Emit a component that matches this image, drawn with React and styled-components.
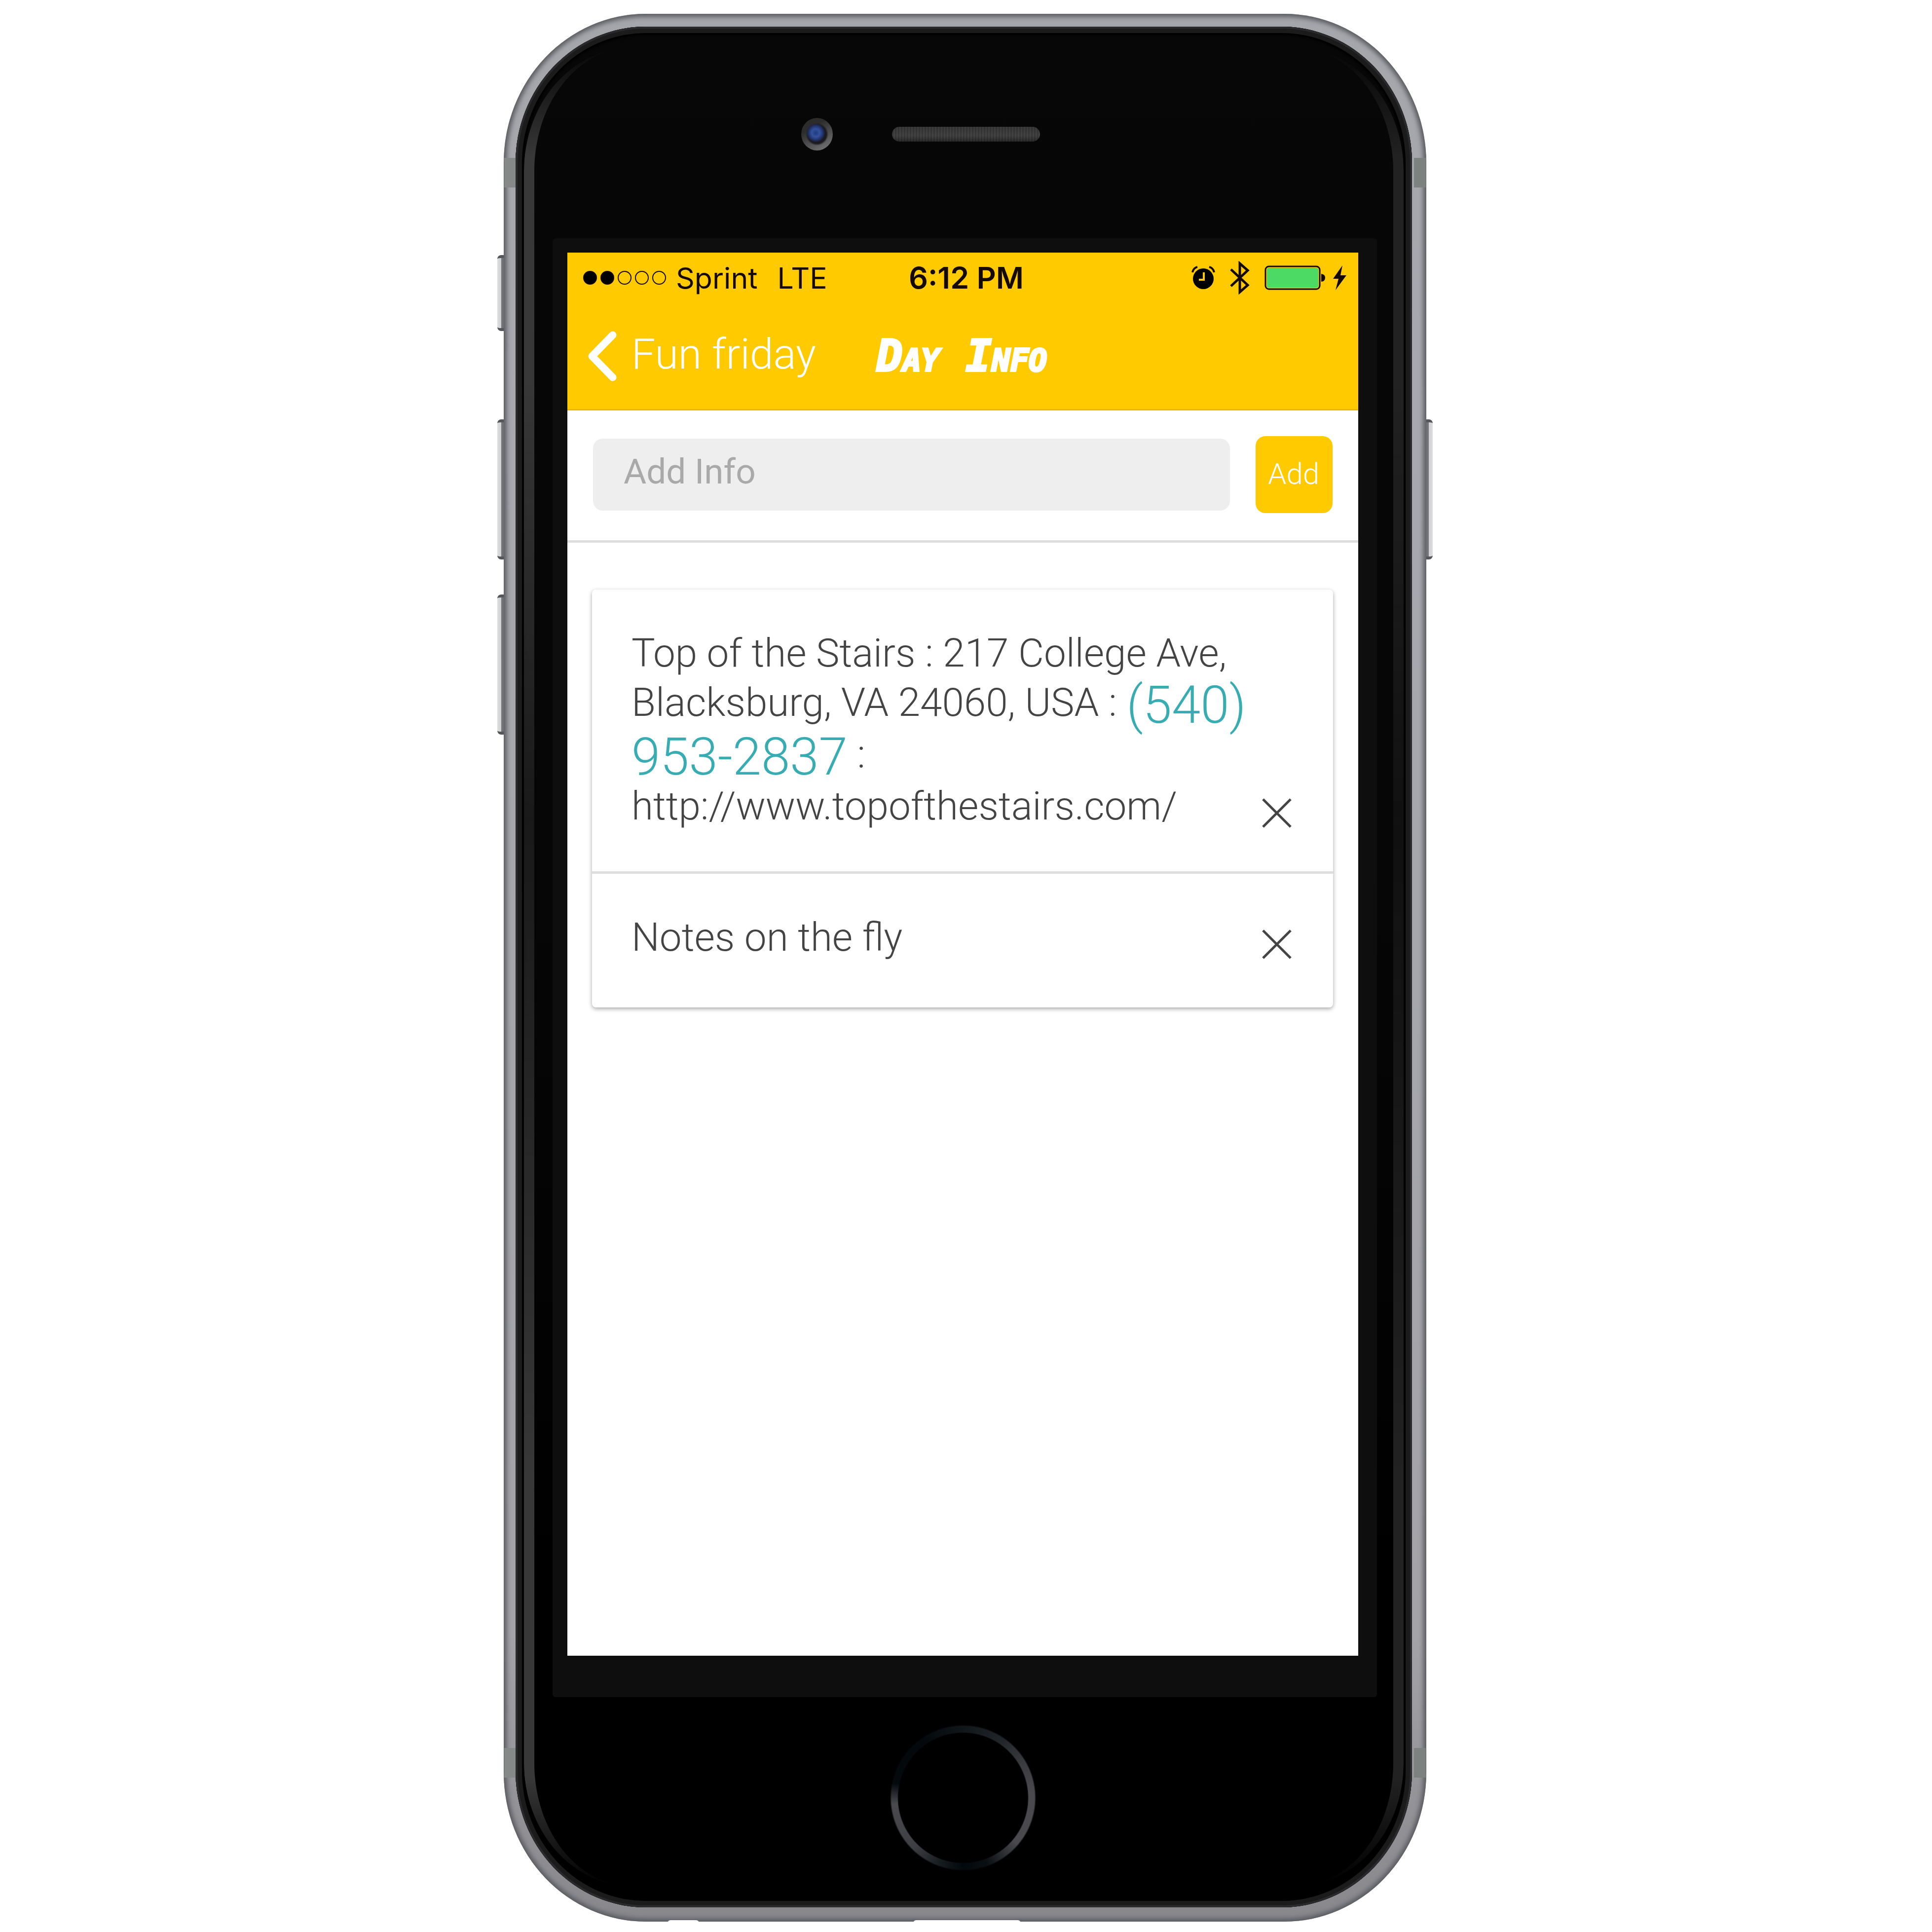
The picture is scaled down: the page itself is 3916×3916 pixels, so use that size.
import React, { useState } from "react";
import styled, { createGlobalStyle } from "styled-components";

const color = {
  yellow: "#ffca00",
  yellowEdge: "#edb900",
  rule: "#dddddd",
  field: "#eeeeee",
  placeholder: "#a9a9a9",
  text: "#444444",
  link: "#37acb3",
  bezel: "#0e0e0e",
};

const GlobalStyle = createGlobalStyle`
  *, *::before, *::after { box-sizing: border-box; }
  body { margin: 0; background: #ffffff; }
  button, input { font: inherit; border: 0; margin: 0; }
`;

const Page = styled.div`
  display: flex;
  justify-content: center;
  min-height: 100vh;
  padding: 28px 4px 20px 0;
  font-family: Roboto, "Liberation Sans", sans-serif;
  font-weight: 300;
`;

/* ---------- device ---------- */

const Phone = styled.div`
  position: relative;
  align-self: flex-start;
  width: 100%;
  max-width: 1870px;
`;

const Metal = styled.div`
  position: relative;
  padding: 26px 29px 29px 24px;
  border-radius: 288px / 302px;
  background: linear-gradient(#a5a6ab, #a8a9af 20%, #a3a3a8 85%, #87878c);
  box-shadow: inset 0 0 10px 6px #5c5d62;
`;

const SideKey = styled.span`
  position: absolute;
  top: ${(p) => p.$top}px;
  ${(p) => p.$side}: -13px;
  width: 20px;
  height: ${(p) => p.$height}px;
  border-radius: 8px;
  border-top: 6px solid #55565b;
  border-bottom: 6px solid #55565b;
  background: linear-gradient(
    to ${(p) => (p.$side === "left" ? "right" : "left")},
    #dededf 0,
    #cfd0d4 8px,
    #74757b 8px,
    #6b6c72 20px
  );
`;

const Antenna = styled.span`
  position: absolute;
  ${(p) => p.$edge}: 292px;
  ${(p) => p.$side}: 1px;
  width: 24px;
  height: 60px;
  background: ${(p) => (p.$side === "left" ? "#858987" : "#7c8280")};
`;

const Port = styled.span`
  position: absolute;
  bottom: -3px;
  left: ${(p) => p.$left}px;
  width: ${(p) => p.$width}px;
  height: 6px;
  border-radius: 6px 6px 0 0;
  background: #ffffff;
`;

const Glass = styled.div`
  position: relative;
  padding: 0 71px 0 75px;
  border-radius: 264px / 276px;
  background: linear-gradient(#070707, #050505 50%, #000000 85%);
  box-shadow: inset 0 0 0 4px #2a2a2c, inset 0 0 0 13px #1b1b1b,
    inset 0 0 4px 17px #000000;

  &::before {
    content: "";
    position: absolute;
    inset: 42px 17px;
    border: solid;
    border-width: 0 21px;
    border-color: transparent #222222 transparent #383838;
    border-radius: 220px / 250px;
    mask-image: linear-gradient(
      transparent,
      #000000 220px,
      #000000 18%,
      rgba(0, 0, 0, 0.4) 42%,
      #000000 78%,
      #000000 calc(100% - 220px),
      transparent
    );
  }
`;

const Earpiece = styled.div`
  display: grid;
  grid-template-columns: 1fr auto 1fr;
  align-items: center;
  column-gap: 120px;
  height: 429px;
  padding: 6px 0 0 4px;
`;

const Camera = styled.span`
  justify-self: end;
  width: 64px;
  height: 66px;
  border-radius: 50%;
  background: radial-gradient(
      circle at 46% 46%,
      #1c3a7a 0,
      #34529e 8px,
      #1f2f66 15px,
      transparent 19px
    ),
    radial-gradient(circle, #1b1b1f 19px, transparent 23px),
    linear-gradient(150deg, #2c2c2c 30%, #77777a 95%);
`;

const Speaker = styled.span`
  width: 300px;
  height: 30px;
  border-radius: 15px;
  background: repeating-linear-gradient(
      90deg,
      rgba(0, 0, 0, 0.18) 0 3px,
      transparent 3px 6px
    ),
    linear-gradient(#3a3a3a, #444444 60%, #2a2a2a);
`;

const Panel = styled.div`
  padding: 29px 38px 84px 30px;
  border-radius: 6px;
  background: ${color.bezel};
`;

const HomeArea = styled.div`
  display: grid;
  place-items: center;
  height: 426px;
  padding: 0 8px 18px 0;
`;

const HomeButton = styled.button`
  position: relative;
  width: 296px;
  height: 296px;
  padding: 0;
  border-radius: 50%;
  background: conic-gradient(
    #10161a,
    #22262b 35deg,
    #3a3b41 60deg,
    #49494e 85deg,
    #49494e 130deg,
    #0a0f13 160deg,
    #03080c 180deg,
    #171c20 200deg,
    #3e3f44 225deg,
    #49494e 265deg,
    #04090d 282deg,
    #03080c 325deg,
    #10161a
  );
  mask-image: radial-gradient(circle, transparent 131px, #000000 133px, #000000 145px, transparent 148px);
`;

/* ---------- screen ---------- */

const Screen = styled.main`
  aspect-ratio: 1603 / 2844;
  background: #ffffff;
`;

const Header = styled.header`
  background: ${color.yellow};
  border-bottom: 3px solid ${color.yellowEdge};
`;

const StatusBar = styled.div`
  display: grid;
  grid-template-columns: 1fr auto 1fr;
  align-items: center;
  height: 102px;
  padding: 0 24px 0 32px;
  color: #140a00;
  font-family: Inter, Roboto, sans-serif;
  font-size: 59px;
  font-weight: 400;
`;

const Carrier = styled.div`
  display: flex;
  align-items: center;
  gap: 40px;
`;

const Signal = styled.span`
  display: flex;
  gap: 7px;
  margin-right: -20px;
`;

const Dot = styled.span`
  width: 28px;
  height: 28px;
  border: 2px solid #140a00;
  border-radius: 50%;
  background: ${(p) => (p.$on ? "#000000" : "transparent")};
`;

const Clock = styled.time`
  padding-left: 6px;
  font-size: 61px;
  font-weight: 600;
`;

const StatusIcons = styled.div`
  display: flex;
  justify-content: flex-end;
  align-items: center;

  svg { display: block; }
`;

const NavBar = styled.nav`
  display: grid;
  grid-template-columns: 1fr auto 1fr;
  align-items: center;
  height: 215px;
  padding: 0 40px 0 36px;
  color: #ffffff;
`;

const BackButton = styled.button`
  display: flex;
  align-items: center;
  justify-self: start;
  gap: 26px;
  padding: 0;
  background: none;
  color: inherit;
  font-size: 86px;
  line-height: 104px;
  white-space: nowrap;
  cursor: pointer;

  span { padding-bottom: 8px; }
`;

const Title = styled.h1`
  margin: 0;
  font-family: "Permanent Marker", "DejaVu Sans Mono", monospace;
  font-size: 88px;
  font-style: italic;
  font-variant: small-caps;
  font-weight: 700;
  line-height: 104px;
  -webkit-text-stroke: 4px currentColor;
`;

const AddForm = styled.form`
  display: flex;
  align-items: center;
  gap: 52px;
  padding: 52px 52px 55px;
  border-bottom: 5px solid ${color.rule};
`;

const FieldLabel = styled.label`
  display: flex;
  flex: 1;
  min-width: 0;
`;

const Field = styled.input`
  width: 100%;
  height: 146px;
  padding: 0 62px 14px;
  border-radius: 20px;
  background: ${color.field};
  color: ${color.text};
  font-size: 71px;
  font-weight: 400;
  outline: none;

  &::placeholder { color: ${color.placeholder}; opacity: 1; }
`;

const AddButton = styled.button`
  width: 156px;
  height: 156px;
  padding: 0 2px 4px 0;
  border-radius: 20px;
  background: ${color.yellow};
  color: #ffffff;
  font-size: 60px;
  cursor: pointer;
`;

const Card = styled.ul`
  margin: 95px 51px 0 50px;
  padding: 0 0 10px;
  list-style: none;
  border-radius: 8px;
  background: #ffffff;
  box-shadow: 0 3px 8px rgba(0, 0, 0, 0.35);
`;

const Row = styled.li`
  display: flex;
  align-items: flex-end;
  gap: 16px;
  padding: 79px 78px 82px 80px;

  & + & { border-top: 5px solid ${color.rule}; }
`;

const Note = styled.p`
  flex: 1;
  min-width: 0;
  margin: 0;
  color: ${color.text};
  font-size: 80px;
  line-height: 100px;
`;

const PhoneLink = styled.a`
  color: ${color.link};
  font-size: 105px;
  line-height: 98px;
  text-decoration: none;
  vertical-align: middle;
`;

const RemoveButton = styled.button`
  display: grid;
  place-items: center;
  width: 72px;
  height: 72px;
  padding: 0;
  background: none;
  color: ${color.text};
  cursor: pointer;
`;

/* ---------- icons ---------- */

const AlarmIcon = () => (
  <svg width="48" height="50" viewBox="0 0 48 50" fill="none" aria-hidden="true">
    <circle cx="24" cy="27" r="21" fill="#000" />
    <path d="M2 14 Q4 5 12 3M46 14 Q44 5 36 3" stroke="#140a00" strokeWidth="4" />
    <path d="M25 14v15H15" stroke={color.yellow} strokeWidth="4" />
  </svg>
);

const BluetoothIcon = () => (
  <svg width="40" height="68" viewBox="0 0 40 68" fill="none" aria-hidden="true">
    <path d="M2 17 L36 49 L20 63 V5 L36 19 L2 51" stroke="#140a00" strokeWidth="5" />
  </svg>
);

const BatteryIcon = () => (
  <svg width="124" height="50" viewBox="0 0 124 50" fill="none" aria-hidden="true">
    <rect x="2" y="2" width="110" height="46" rx="7" stroke="#140a00" strokeWidth="3" />
    <rect x="5" y="5" width="104" height="40" rx="4" fill="#4cd964" />
    <path d="M115 17 Q123 18 123 25 Q123 32 115 33Z" fill="#140a00" />
  </svg>
);

const BoltIcon = () => (
  <svg width="28" height="50" viewBox="0 0 28 50" aria-hidden="true">
    <path d="M20 0 L1 27 H12 L6 50 L28 20 H16Z" fill="#140a00" />
  </svg>
);

const ChevronIcon = () => (
  <svg width="68" height="104" viewBox="0 0 68 104" fill="none" aria-hidden="true">
    <path
      d="M56 9 L14 52 L56 95"
      stroke="#fff"
      strokeWidth="15"
      strokeLinecap="round"
      strokeLinejoin="round"
    />
  </svg>
);

const CloseIcon = () => (
  <svg width="60" height="60" viewBox="0 0 60 60" fill="none" aria-hidden="true">
    <path d="M2 2 L58 58 M58 2 L2 58" stroke="currentColor" strokeWidth="5" />
  </svg>
);

const IconSlot = styled.span`
  display: block;
  margin-left: ${(p) => p.$gap}px;
`;

const initialNotes = [
  {
    id: 1,
    text: "Top of the Stairs : 217 College Ave, Blacksburg, VA 24060, USA : ",
    phone: "(540) 953-2837",
    rest: " : http://www.topofthestairs.com/",
  },
  { id: 2, text: "Notes on the fly" },
];

export default function App() {
  const [notes, setNotes] = useState(initialNotes);
  const [draft, setDraft] = useState("");

  const addNote = (event) => {
    event.preventDefault();
    if (!draft.trim()) return;
    setNotes([...notes, { id: Date.now(), text: draft.trim() }]);
    setDraft("");
  };

  return (
    <Page>
      <GlobalStyle />
      <Phone>
        <SideKey $side="left" $top={489} $height={154} />
        <SideKey $side="left" $top={822} $height={284} />
        <SideKey $side="left" $top={1177} $height={284} />
        <SideKey $side="right" $top={822} $height={284} />
        <Metal>
          <Antenna $side="left" $edge="top" />
          <Antenna $side="right" $edge="top" />
          <Antenna $side="left" $edge="bottom" />
          <Antenna $side="right" $edge="bottom" />
          <Port $left={332} $width={64} />
          <Port $left={830} $width={218} />
          <Glass>
            <Earpiece>
              <Camera />
              <Speaker />
            </Earpiece>
            <Panel>
              <Screen>
                <Header>
                  <StatusBar>
                    <Carrier>
                      <Signal>
                        {[true, true, false, false, false].map((on, i) => (
                          <Dot key={i} $on={on} />
                        ))}
                      </Signal>
                      <span>Sprint</span>
                      <span>LTE</span>
                    </Carrier>
                    <Clock>6:12 PM</Clock>
                    <StatusIcons>
                      <AlarmIcon />
                      <IconSlot $gap={30}><BluetoothIcon /></IconSlot>
                      <IconSlot $gap={30}><BatteryIcon /></IconSlot>
                      <IconSlot $gap={14}><BoltIcon /></IconSlot>
                    </StatusIcons>
                  </StatusBar>
                  <NavBar>
                    <BackButton type="button">
                      <ChevronIcon />
                      <span>Fun friday</span>
                    </BackButton>
                    <Title>Day Info</Title>
                  </NavBar>
                </Header>
                <AddForm onSubmit={addNote}>
                  <FieldLabel>
                    <Field
                      type="text"
                      placeholder="Add Info"
                      aria-label="Add Info"
                      value={draft}
                      onChange={(event) => setDraft(event.target.value)}
                    />
                  </FieldLabel>
                  <AddButton type="submit">Add</AddButton>
                </AddForm>
                <Card>
                  {notes.map((note) => (
                    <Row key={note.id}>
                      <Note>
                        {note.text}
                        {note.phone && (
                          <PhoneLink href="tel:+15409532837">{note.phone}</PhoneLink>
                        )}
                        {note.rest}
                      </Note>
                      <RemoveButton
                        type="button"
                        aria-label="Remove note"
                        onClick={() => setNotes(notes.filter((n) => n.id !== note.id))}
                      >
                        <CloseIcon />
                      </RemoveButton>
                    </Row>
                  ))}
                </Card>
              </Screen>
            </Panel>
            <HomeArea>
              <HomeButton type="button" aria-label="Home" />
            </HomeArea>
          </Glass>
        </Metal>
      </Phone>
    </Page>
  );
}
